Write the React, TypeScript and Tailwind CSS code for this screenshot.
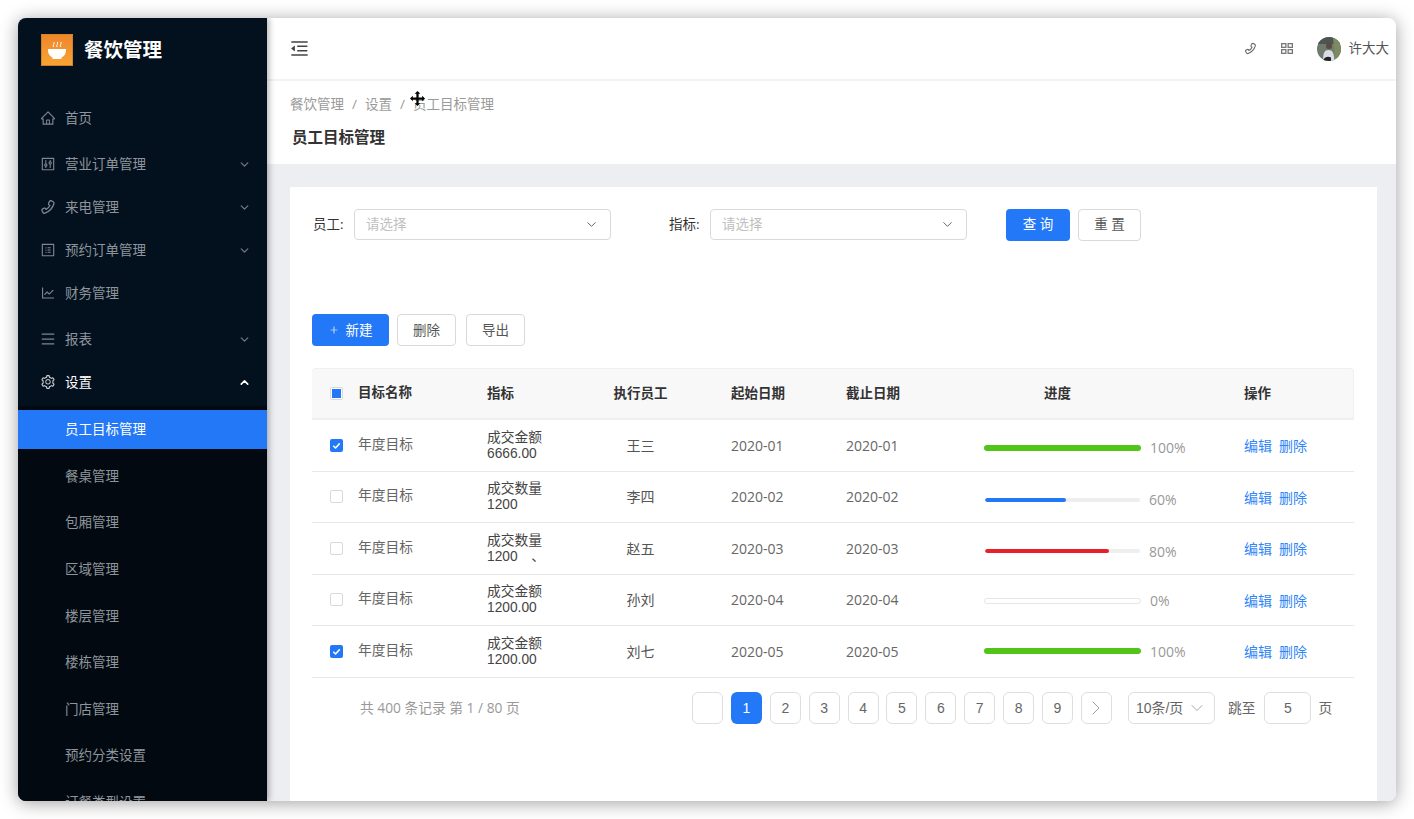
import React from "react";
import { AiOutlineHome, AiOutlineControl, AiOutlineProfile, AiOutlineLineChart, AiOutlineMenu, AiOutlineSetting, AiOutlineMenuFold, AiOutlinePlus } from "react-icons/ai";
import { ChevronDown, ChevronUp, ChevronRight } from "lucide-react";

const Phone = ({ className }: { className?: string }) => (
  <svg viewBox="0 0 16 16" className={className} fill="none" stroke="currentColor" strokeWidth="1.3" strokeLinecap="round" strokeLinejoin="round">
    <path d="M11 1.500l2.200 1.200c.8.500 1 1.300.7 2.100C12.500 9.500 9.500 12.500 5 14.200c-.8.300-1.700 0-2.100-.8L2 11.500c-.3-.7 0-1.400.7-1.700l1.500-.6c.6-.2 1.200 0 1.500.500l.4.800c1.800-1 3-2.400 3.800-4l-.8-.5c-.5-.3-.7-.9-.5-1.500l.7-1.800c.3-.7 1-1 1.700-.700z" />
  </svg>
);

const font = "font-['Open_Sans','Noto_Sans_CJK_SC',sans-serif]";

const mainMenu = [
  { t: "首页", I: AiOutlineHome, mt: "mt-0", arrow: false },
  { t: "营业订单管理", I: AiOutlineControl, mt: "mt-[6px]", arrow: true },
  { t: "来电管理", I: Phone, mt: "mt-[3px]", arrow: true },
  { t: "预约订单管理", I: AiOutlineProfile, mt: "mt-[3px]", arrow: true },
  { t: "财务管理", I: AiOutlineLineChart, mt: "mt-[3px]", arrow: false },
  { t: "报表", I: AiOutlineMenu, mt: "mt-[6px]", arrow: true },
];
const subMenu = ["餐桌管理", "包厢管理", "区域管理", "楼层管理", "楼栋管理", "门店管理", "预约分类设置", "订餐类型设置"];

const rows = [
  { k: "成交金额", v: "6666.00", e: "王三", d: "2020-01", p: 100, c: "bg-[#52c41a]", checked: true, off: "pt-[5px]" },
  { k: "成交数量", v: "1200", e: "李四", d: "2020-02", p: 52, label: "60%", c: "bg-[#2378f7]", checked: false, off: "pt-[6px]" },
  { k: "成交数量", v: "1200　、", e: "赵五", d: "2020-03", p: 80, c: "bg-[#e8202e]", checked: false, off: "pt-[6px]" },
  { k: "成交金额", v: "1200.00", e: "孙刘", d: "2020-04", p: 0, c: "bg-[#2378f7]", checked: false, off: "pt-[2px]" },
  { k: "成交金额", v: "1200.00", e: "刘七", d: "2020-05", p: 100, c: "bg-[#52c41a]", checked: true, off: "pt-0" },
];

const cols = "grid grid-cols-[46px_129px_113px_131px_115px_138px_260px_110px] items-center";

function Sel({ w, ph }: { w: string; ph: string }) {
  return (
    <div className={`${w} h-[31px] flex items-center justify-between pl-[11px] pr-[11px] border border-[#d9d9d9] rounded-[4px] bg-white`}>
      <span className="text-[13.5px] text-[#bfbfbf]">{ph}</span>
      <ChevronDown className="w-[15px] h-[15px] text-[#666]" strokeWidth={1.6} />
    </div>
  );
}

function Btn({ w, children, primary }: { w: string; children: React.ReactNode; primary?: boolean }) {
  return (
    <div className={`${w} h-[32px] flex items-center justify-center rounded-[4px] text-[13.5px] ${primary ? "bg-[#2378f7] text-white" : "bg-white border border-[#d9d9d9] text-[#555]"}`}>
      {children}
    </div>
  );
}

function Page({ children, active }: { children?: React.ReactNode; active?: boolean }) {
  return (
    <div className={`w-[31px] h-[32px] flex items-center justify-center rounded-[6px] text-[14px] font-['Liberation_Sans',sans-serif] ${active ? "bg-[#2378f7] text-white" : "bg-white border border-[#dedede] text-[#666]"}`}>
      {children}
    </div>
  );
}

export default function App() {
  return (
    <div className={`w-[1414px] h-[819px] p-[18px] bg-white ${font}`}>
      <div className="w-full h-full flex overflow-hidden rounded-[8px] shadow-[0_2px_18px_rgba(0,0,0,0.38)] bg-white">
        {/* sidebar */}
        <aside className="w-[249px] h-full shrink-0 bg-[#03101e] z-10 overflow-hidden shadow-[2px_0_6px_rgba(0,0,0,0.3)]">
          <div className="h-[80px] pl-[23px] pt-[16px] flex items-start gap-[11px]">
            <div className="w-[32px] h-[32px] bg-gradient-to-b from-[#ee862b] to-[#f7a434] border border-[#b5762a]/60 flex items-center justify-center">
              <svg viewBox="0 0 30 30" className="w-[30px] h-[30px]">
                <path d="M6 14h18v1.500c0 3.600-2.200 6-4.500 7v1.500h-9v-1.500c-2.300-1-4.500-3.400-4.500-7z" fill="#fff" />
                <path d="M11.500 12c-.8-1.800 1-2.800.5-5M15 12c-.8-1.800 1-2.800.5-5M18.500 12c-.8-1.800 1-2.800.5-5" stroke="#fff" strokeWidth="1" fill="none" />
              </svg>
            </div>
            <span className="text-[19.5px] leading-[32px] font-bold text-white">餐饮管理</span>
          </div>
          {mainMenu.map(({ t, I, mt, arrow }) => (
            <div key={t} className={`h-[40px] ${mt} pl-[22px] pr-[16px] flex items-center text-[#8e959c]`}>
              <I className="w-[16px] h-[16px] mr-[9px] text-[#7f8790]" />
              <span className="text-[13.5px] flex-1">{t}</span>
              {arrow && <ChevronDown className="w-[13px] h-[13px] text-[#6d7680]" strokeWidth={2.5} />}
            </div>
          ))}
          <div className="h-[40px] mt-[3px] pl-[22px] pr-[16px] flex items-center text-white">
            <AiOutlineSetting className="w-[16px] h-[16px] mr-[9px] text-[#c9ccd0]" />
            <span className="text-[13.5px] flex-1">设置</span>
            <ChevronUp className="w-[13px] h-[13px]" strokeWidth={3} />
          </div>
          <div className="mt-[4px] pt-[3.500px] bg-[#020910] h-[420px]">
            <div className="h-[39px] pl-[47px] flex items-center bg-[#2378f7] text-white text-[13.5px] mb-[8px]">员工目标管理</div>
            {subMenu.map((t) => (
              <div key={t} className="h-[39px] pl-[47px] flex items-center text-[#8e959c] text-[13.5px] mb-[7.600px]">{t}</div>
            ))}
          </div>
        </aside>

        {/* main */}
        <div className="flex-1 min-w-0 h-full flex flex-col relative">
          <header className="h-[63px] shrink-0 flex items-center border-b-2 border-[#f3f3f3] pl-[22px] pr-[7px]">
            <AiOutlineMenuFold className="w-[21px] h-[21px] text-[#444]" />
            <div className="ml-auto flex items-center text-[#666]">
              <Phone className="w-[13px] h-[13px] text-[#666]" />
              <svg viewBox="0 0 12 11" className="w-[12px] h-[11px] ml-[24px] text-[#777]" fill="none" stroke="currentColor" strokeWidth="1.300">
                <rect x=".65" y=".65" width="4.200" height="3.700" />
                <rect x="7.150" y=".65" width="4.200" height="3.700" />
                <rect x=".65" y="6.650" width="4.200" height="3.700" />
                <rect x="7.150" y="6.650" width="4.200" height="3.700" />
              </svg>
              <div className="w-[24px] h-[24px] ml-[24px] rounded-full overflow-hidden">
                <svg viewBox="0 0 24 24" className="w-[24px] h-[24px]">
                  <rect width="24" height="24" fill="#6f7a6c" />
                  <rect width="24" height="7" fill="#4d5552" />
                  <path d="M16 0h8v24h-6z" fill="#7c8a60" />
                  <circle cx="12" cy="9" r="3" fill="#5a4a44" />
                  <path d="M6 24c0-8 1.500-11 5.500-11s5.500 3 6 11z" fill="#d7dde3" />
                  <path d="M6 24c1-4 5-5 8-3.500v3.500z" fill="#222226" />
                </svg>
              </div>
              <span className="ml-[8px] text-[13.5px] text-[#555]">许大大</span>
            </div>
          </header>
          <div className="h-[83px] shrink-0 pl-[23px] pt-[13px]">
            <div className="flex items-center text-[13.5px] text-[#9a9a9a] leading-[20px]">
              <span>餐饮管理</span><span className="mx-[8px]">/</span><span>设置</span><span className="mx-[8px]">/</span><span>员工目标管理</span>
            </div>
            <div className="mt-[13px] ml-[2px] text-[15.5px] leading-[20px] font-bold text-[#333]">员工目标管理</div>
          </div>
          <div className="flex-1 min-h-0 bg-[#eceef2] pt-[23px] pl-[23px] pr-[19px]">
            <div className="h-full bg-white pl-[22px] pr-[23px] pt-[22px]">
              {/* filters */}
              <div className="flex items-center h-[31px] text-[13.5px]">
                <span className="w-[42px] pl-px text-[#333]">员工:</span>
                <Sel w="w-[257px]" ph="请选择" />
                <span className="ml-[58px] w-[41px] text-[#333]">指标:</span>
                <Sel w="w-[257px]" ph="请选择" />
                <div className="ml-[39px] flex gap-[8px]">
                  <Btn w="w-[64px]" primary>查 询</Btn>
                  <Btn w="w-[63px]">重 置</Btn>
                </div>
              </div>
              {/* actions */}
              <div className="mt-[74px] flex items-center">
                <Btn w="w-[77px]" primary><AiOutlinePlus className="w-[10px] h-[10px] mr-[7px]" />新建</Btn>
                <div className="ml-[8px]"><Btn w="w-[59px]">删除</Btn></div>
                <div className="ml-[10px]"><Btn w="w-[59px]">导出</Btn></div>
              </div>
              {/* table */}
              <div className="mt-[22px] w-[1042px]">
                <div className={`${cols} h-[52px] bg-[#f8f8f8] border-t border-r border-b-2 border-[#efefef] rounded-t-[4px] text-[13.5px] font-bold text-[#333] box-border`}>
                  <div className="pl-[18px]">
                    <div className="w-[13px] h-[13px] border border-[#d9d9d9] rounded-[2px] bg-white flex items-center justify-center">
                      <div className="w-[9px] h-[9px] bg-[#2378f7]" />
                    </div>
                  </div>
                  <div className="mb-[3px]">目标名称</div>
                  <div>指标</div>
                  <div className="pr-[50px] text-center">执行员工</div>
                  <div>起始日期</div>
                  <div>截止日期</div>
                  <div className="pl-[60px]">进度</div>
                  <div>操作</div>
                </div>
                {rows.map((r) => (
                  <div key={r.e} className={`${cols} h-[51.5px] box-border border-b border-[#e8e8e8] text-[14px] text-[#555]`}>
                    <div className="pl-[18px]">
                      {r.checked ? (
                        <div className="w-[13px] h-[13px] rounded-[2px] bg-[#2378f7] flex items-center justify-center">
                          <svg viewBox="0 0 12 12" className="w-[11px] h-[11px]"><path d="M2.500 6.200l2.500 2.500 4.500-5" stroke="#fff" strokeWidth="1.700" fill="none" /></svg>
                        </div>
                      ) : (
                        <div className="w-[13px] h-[13px] rounded-[2px] bg-white border border-[#d9d9d9]" />
                      )}
                    </div>
                    <div className="mb-[2px] text-[13.75px] text-[#666]">年度目标</div>
                    <div className="pt-[1px] leading-[16px] text-[#444] whitespace-pre font-['Liberation_Sans','Noto_Sans_CJK_SC',sans-serif] text-[13.75px]">
                      <div>{r.k}</div>
                      <div>{r.v}</div>
                    </div>
                    <div className="pr-[50px] text-center">{r.e}</div>
                    <div className="text-[#666]">{r.d}</div>
                    <div className="text-[#666]">{r.d}</div>
                    <div className={`flex items-center ${r.off}`}>
                      {r.p === 100 ? (
                        <div className={`w-[157px] h-[6px] rounded-full ${r.c}`} />
                      ) : r.p === 0 ? (
                        <div className="w-[157px] h-[6px] rounded-full bg-white border border-[#e6e6e6]" />
                      ) : (
                        <div className="ml-px w-[155px] h-[4px] rounded-full bg-[#eeeeee] overflow-hidden">
                          <div className={`h-full rounded-full ${r.c}`} style={{ width: `${r.p}%` }} />
                        </div>
                      )}
                      <span className="ml-[9px] text-[#999]">{r.label ?? `${r.p}%`}</span>
                    </div>
                    <div className="flex gap-[7px] pt-[1px] text-[#2f86f6]">
                      <span>编辑</span><span>删除</span>
                    </div>
                  </div>
                ))}
              </div>
              {/* pagination */}
              <div className="mt-[14.500px] flex items-center text-[13.75px] text-[#666] h-[32px]">
                <span className="ml-[48px] w-[332px] text-[#999]">共 400 条记录 第 1 / 80 页</span>
                <div className="flex gap-[7.900px]">
                  <Page />
                  <Page active>1</Page>
                  {[2, 3, 4, 5, 6, 7, 8, 9].map((n) => <Page key={n}>{n}</Page>)}
                  <Page><ChevronRight className="w-[24px] h-[24px] text-[#888]" strokeWidth={0.8} /></Page>
                </div>
                <div className="ml-[16px] w-[87px] h-[32px] border border-[#dedede] rounded-[6px] flex items-center justify-between pl-[7px] pr-[7px] text-[14px] font-['Liberation_Sans','Noto_Sans_CJK_SC',sans-serif] whitespace-nowrap">
                  <span>10条/页</span>
                  <ChevronDown className="w-[20px] h-[20px] text-[#888]" strokeWidth={0.9} />
                </div>
                <span className="ml-[13px]">跳至</span>
                <div className="ml-[9px] w-[47px] h-[32px] border border-[#dedede] rounded-[6px] flex items-center justify-center font-['Liberation_Sans',sans-serif] text-[14px]">5</div>
                <span className="ml-[7px]">页</span>
              </div>
            </div>
          </div>
          {/* move cursor */}
          <svg viewBox="0 0 16 16" className="absolute left-[143px] top-[73px] w-[15px] h-[15px]">
            <path d="M8 0l3 3H9.200v3.800H13V5l3 3-3 3V9.200H9.200V13H11l-3 3-3-3h1.800V9.200H3V11L0 8l3-3v1.800h3.800V3H5z" fill="#000" />
          </svg>
        </div>
      </div>
    </div>
  );
}
